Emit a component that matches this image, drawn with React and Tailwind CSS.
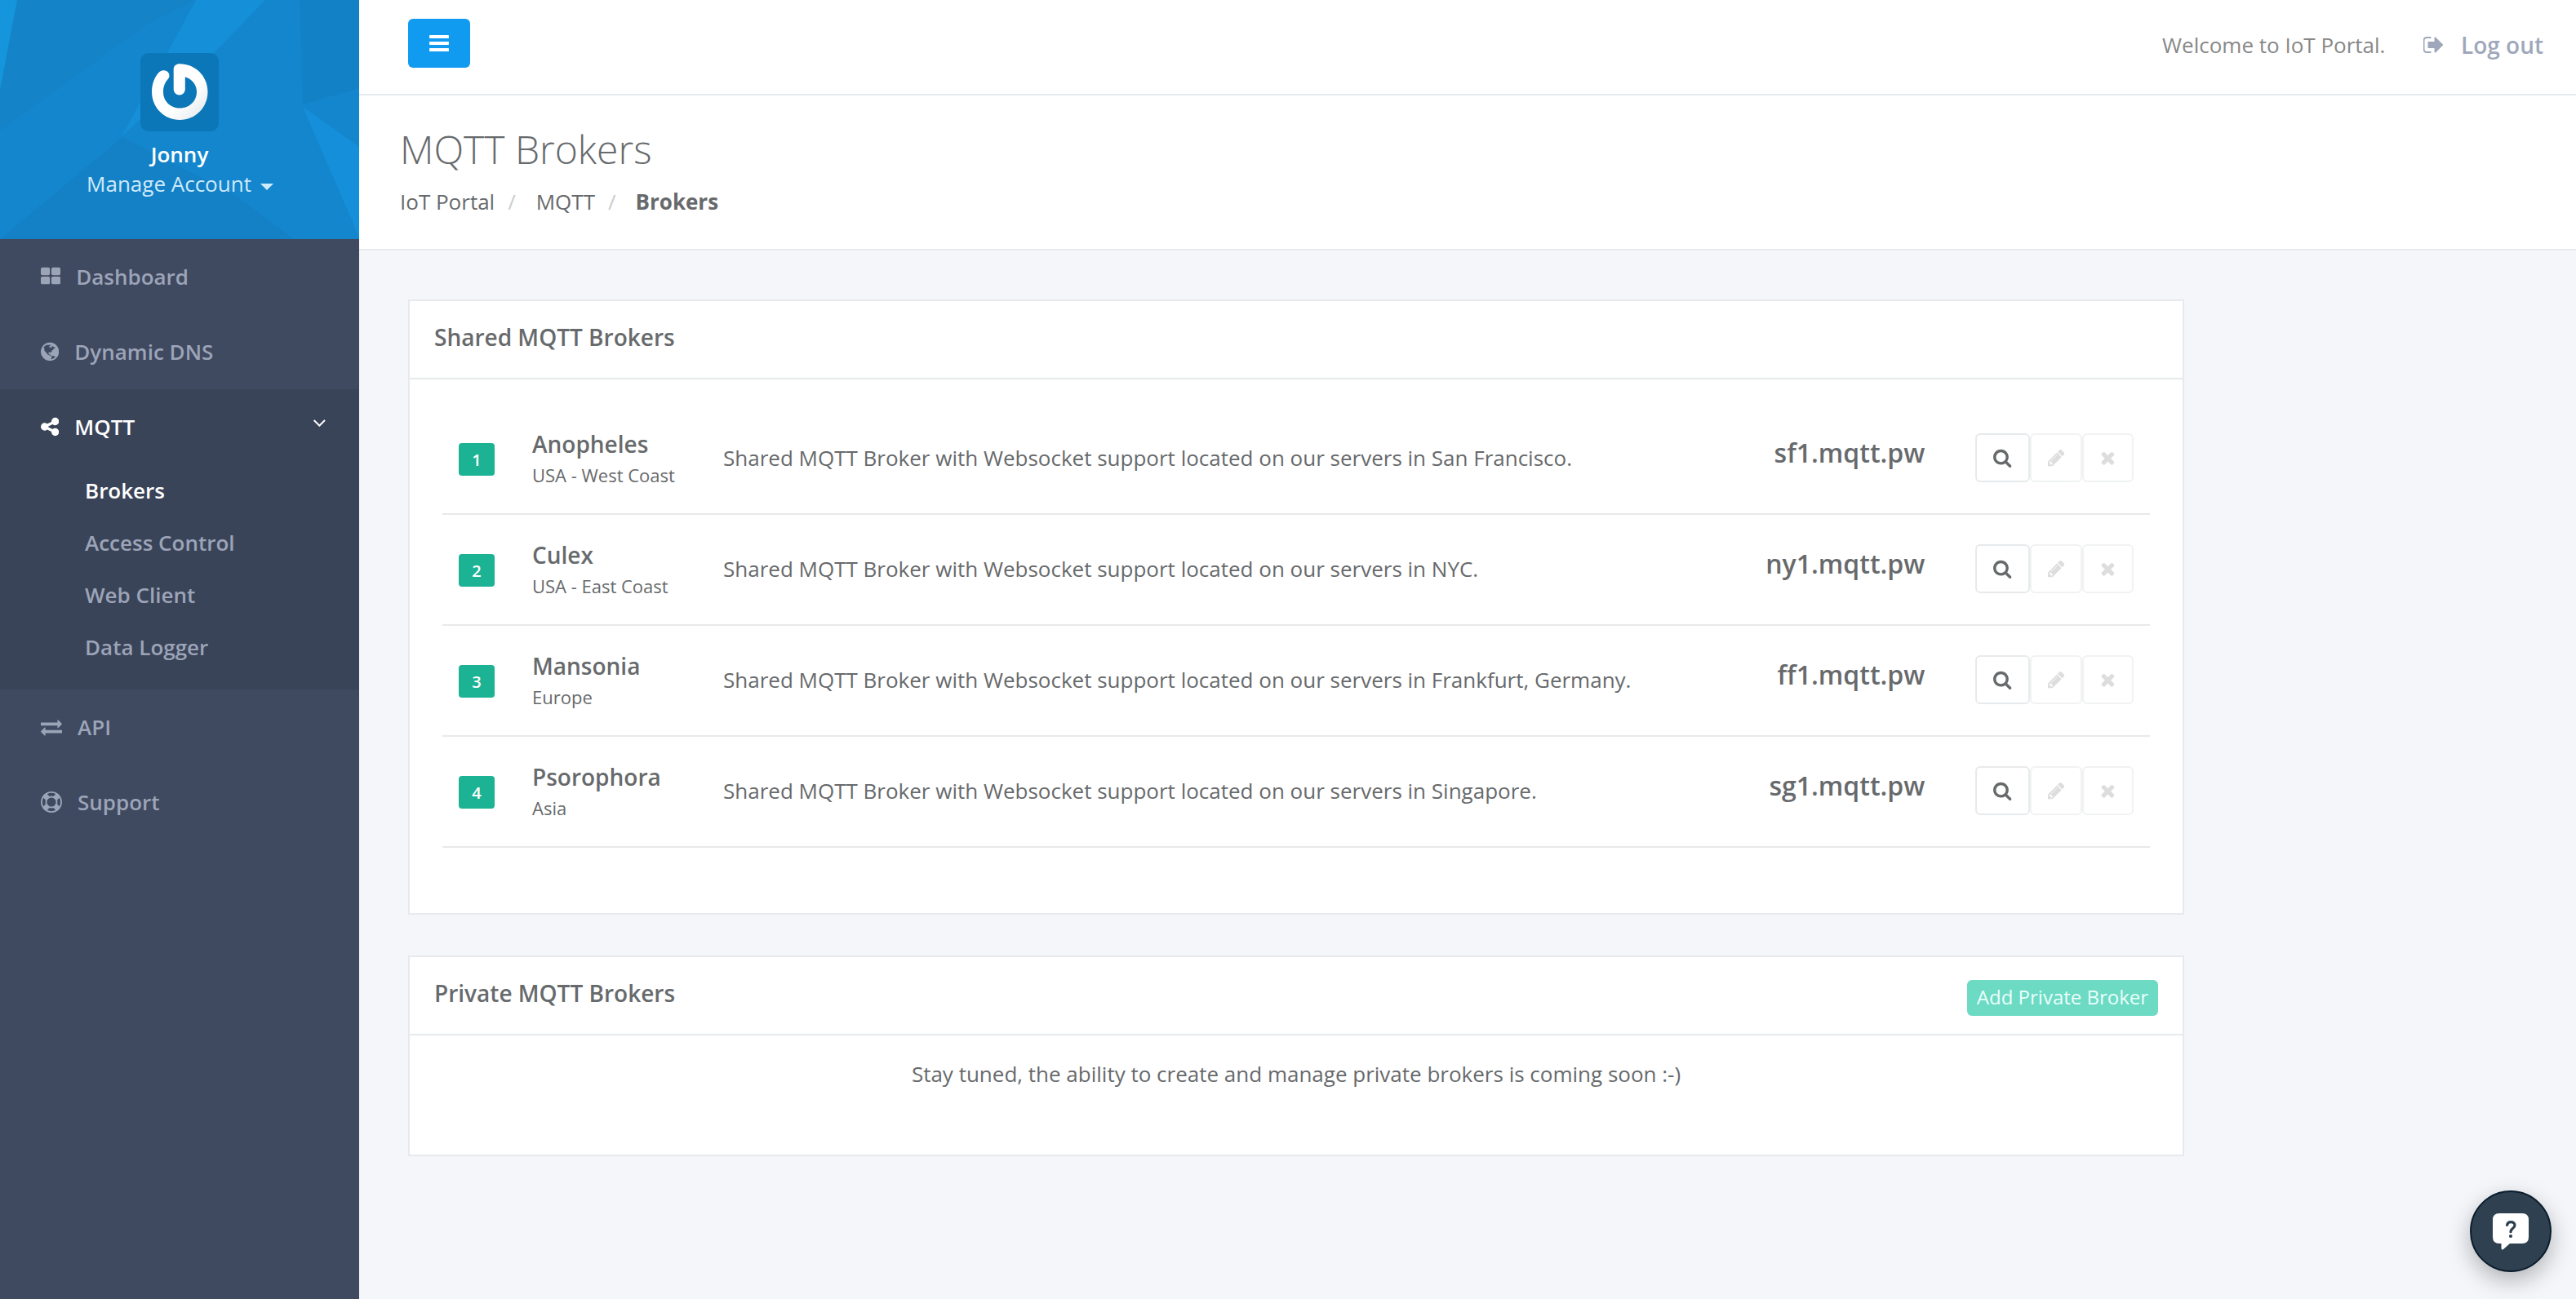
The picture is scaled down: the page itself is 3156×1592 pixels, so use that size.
import React from "react";

const ICONS = {
  bars: ["128 0 1536 1792", "M1664 1344v128q0 26-19 45t-45 19h-1408q-26 0-45-19t-19-45v-128q0-26 19-45t45-19h1408q26 0 45 19t19 45zm0-512v128q0 26-19 45t-45 19h-1408q-26 0-45-19t-19-45v-128q0-26 19-45t45-19h1408q26 0 45 19t19 45zm0-512v128q0 26-19 45t-45 19h-1408q-26 0-45-19t-19-45v-128q0-26 19-45t45-19h1408q26 0 45 19t19 45z"],
  thLarge: ["64 0 1664 1792", "M832 1024v384q0 52-38 90t-90 38h-512q-52 0-90-38t-38-90v-384q0-52 38-90t90-38h512q52 0 90 38t38 90zm0-768v384q0 52-38 90t-90 38h-512q-52 0-90-38t-38-90v-384q0-52 38-90t90-38h512q52 0 90 38t38 90zm896 768v384q0 52-38 90t-90 38h-512q-52 0-90-38t-38-90v-384q0-52 38-90t90-38h512q52 0 90 38t38 90zm0-768v384q0 52-38 90t-90 38h-512q-52 0-90-38t-38-90v-384q0-52 38-90t90-38h512q52 0 90 38t38 90z"],
  globe: ["128 0 1536 1792", "M896 128q209 0 385.5 103t279.5 279.5 103 385.5-103 385.5-279.5 279.5-385.5 103-385.5-103-279.5-279.5-103-385.5 103-385.5 279.5-279.5 385.5-103zm274 521q-2 1-9.500 9.500t-13.500 9.500q2 0 4.500-5t5-11 3.500-7q6-7 22-15 14-6 52-12 34-8 51 11-2-2 9.500-13t14.500-12q3-2 15-4.500t15-7.500l2-22q-12 1-17.500-7t-6.500-21q0 2-6 8 0-7-4.500-8t-11.500 1-9 1q-10-3-15-7.500t-8-16.500-4-15q-2-5-9.500-11t-9.500-10q-1-2-2.500-5.500t-3-6.500-4-5.500-5.500-2.500-7 5-7.500 10-4.500 5q-3-2-6-1.500t-4.500 1-4.500 3-5 3.500q-3 2-8.500 3t-8.500 2q15-5-1-11-10-4-16-3 9-4 7.500-12t-8.500-14h5q-1-4-8.500-8.500t-17.500-8.500-13-6q-8-5-34-9.500t-33-.5q-5 6-4.500 10.500t4 14 3.500 12.500q1 6-5.500 13t-6.500 12q0 7 14 15.500t10 21.500q-3 8-16 16t-16 12q-5 8-1.500 18.500t10.500 16.500q2 2 1.500 4t-3.500 4.500-5.500 4-6.500 3.500l-3 2q-11 5-20.500-6t-13.500-26q-7-25-16-30-23-8-29 1-5-13-41-26-25-9-58-4 6-1 0-15-7-15-19-12 3-6 4-17.500t1-13.500q3-13 12-23 1-1 7-8.500t9.500-13.500.5-6q35 4 50-11 5-5 11.500-17t10.500-17q9-6 14-5.500t14.500 5.500 14.500 5q14 1 15.500-11t-7.500-20q12 1 3-17-4-7-8-9-12-4-27 5-8 4 2 8-1-1-9.500 10.500t-16.500 17.500-16-5q-1-1-5.500-13.500t-9.500-13.500q-8 0-16 15 3-8-11-15t-24-8q19-12-8-27-7-4-20.500-5t-19.500 4q-5 7-5.500 11.500t5 8 10.500 5.500 11.500 4 8.500 3q14 10 8 14-2 1-8.500 3.500t-11.500 4.500-6 4q-3 4 0 14t-2 14q-5-5-9-17.500t-7-16.500q7 9-25 6l-10-1q-4 0-16 2t-20.500 1-13.500-8q-4-8 0-20 1-4 4-2-4-3-11-9.500t-10-8.500q-46 15-94 41 6 1 12-1 5-2 13-6.500t10-5.500q34-14 42-7l5-5q14 16 20 25-7-4-30-1-20 6-22 12 7 12 5 18-4-3-11.500-10t-14.500-11-15-5q-16 0-22 1-146 80-235 222 7 7 12 8 4 1 5 9t2.500 11 11.500-3q9 8 3 19 1-1 44 27 19 17 21 21 3 11-10 18-1-2-9-9t-9-4q-3 5 .5 18.500t10.500 12.500q-7 0-9.500 16t-2.500 35.500-1 23.500l2 1q-3 12 5.500 34.500t21.500 19.500q-13 3 20 43 6 8 8 9 3 2 12 7.500t15 10 10 10.500q4 5 10 22.500t14 23.500q-2 6 9.500 20t10.500 23q-1 0-2.500 1t-2.500 1q3 7 15.500 14t15.500 13q1 3 2 10t3 11 8 2q2-20-24-62-15-25-17-29-3-5-5.500-15.500t-4.500-14.500q2 0 6 1.500t8.500 3.500 7.500 4 2 3q-3 7 2 17.500t12 18.500 17 19 12 13q6 6 14 19.500t0 13.500q9 0 20 10.500t17 19.500q5 8 8 26t5 24q2 7 8.500 13.500t12.500 9.500l16 8 13 7q5 2 18.500 10.500t21.500 11.500q10 4 16 4t14.500-2.500 13.500-3.500q15-2 29 15t21 21q36 19 55 11-2 1 .5 7.500t8 15.500 9 14.500 5.500 8.500q5 6 18 15t18 15q6-4 7-9-3 8 7 20t18 10q14-3 14-32-31 15-49-18 0-1-2.500-5.500t-4-8.500-2.500-8.500 0-7.500 5-3q9 0 10-3.500t-2-12.500-4-13q-1-8-11-20t-12-15q-5 9-16 8t-16-9q0 1-1.500 5.500t-1.500 6.500q-13 0-15-1 1-3 2.500-17.500t3.500-22.500q1-4 5.500-12t7.500-14.500 4-12.500-4.500-9.500-17.500-2.500q-19 1-26 20-1 3-3 10.500t-5 11.500-9 7q-7 3-24 2t-24-5q-13-8-22.500-29t-9.500-37q0-10 2.500-26.500t3-25-5.500-24.500q3-2 9-9.500t10-10.500q2-1 4.500-1.500t4.500 0 4-1.500 3-6q-1-1-4-3-3-3-4-3 7 3 28.500-1.500t27.500 1.500q15 11 22-2 0-1-2.500-9.500t-.5-13.500q5 27 29 9 3 3 15.500 5t17.500 5q3 2 7 5.500t5.500 4.500 5-.5 8.500-6.500q10 14 12 24 11 40 19 44 7 3 11 2t4.500-9.500 0-14-1.500-12.500l-1-8v-18l-1-8q-15-3-18.500-12t1.500-18.500 15-18.500q1-1 8-3.500t15.500-6.500 12.500-8q21-19 15-35 7 0 11-9-1 0-5-3t-7.500-5-4.500-2q9-5 2-16 5-3 7.500-11t7.500-10q9 12 21 2 7-8 1-16 5-7 20.500-10.500t18.500-9.500q7 2 8-2t1-12 3-12q4-5 15-9t13-5l17-11q3-4 0-4 18 2 31-11 10-11-6-20 3-6-3-9.500t-15-5.500q3-1 11.500-.5t10.500-1.500q15-10-7-16-17-5-43 12zm-163 877q206-36 351-189-3-3-12.500-4.500t-12.500-3.500q-18-7-24-8 1-7-2.500-13t-8-9-12.500-8-11-7q-2-2-7-6t-7-5.500-7.500-4.500-8.500-2-10 1l-3 1q-3 1-5.500 2.500t-5.500 3-4 3 0 2.500q-21-17-36-22-5-1-11-5.500t-10.500-7-10-1.500-11.500 7q-5 5-6 15t-2 13q-7-5 0-17.500t2-18.500q-3-6-10.500-4.500t-12 4.500-11.500 8.500-9 6.500-8.500 5.500-8.500 7.500q-3 4-6 12t-5 11q-2-4-11.500-6.500t-9.500-5.500q2 10 4 35t5 38q7 31-12 48-27 25-29 40-4 22 12 26 0 7-8 20.500t-7 21.500q0 6 2 16z"],
  share: ["128 0 1536 1792", "M1344 1024q133 0 226.500 93.500t93.500 226.500-93.500 226.500-226.500 93.500-226.500-93.500-93.500-226.500q0-12 2-34l-360-180q-92 86-218 86-133 0-226.500-93.500t-93.500-226.500 93.500-226.500 226.500-93.500q126 0 218 86l360-180q-2-22-2-34 0-133 93.500-226.500t226.500-93.500 226.500 93.500 93.500 226.500-93.500 226.500-226.500 93.500q-126 0-218-86l-360 180q2 22 2 34t-2 34l360 180q92-86 218-86z"],
  exchange: ["0 0 1792 1792", "M1792 1184v192q0 13-9.500 22.500t-22.500 9.500h-1376v192q0 13-9.500 22.500t-22.500 9.500q-12 0-24-10l-319-320q-9-9-9-22 0-14 9-23l320-320q9-9 23-9 13 0 22.500 9.500t9.500 22.500v192h1376q13 0 22.500 9.500t9.500 22.500zm0-544q0 14-9 23l-320 320q-9 9-23 9-13 0-22.500-9.500t-9.500-22.500v-192h-1376q-13 0-22.500-9.500t-9.500-22.500v-192q0-13 9.500-22.500t22.500-9.500h1376v-192q0-14 9-23t23-9q12 0 24 10l319 319q9 9 9 23z"],
  lifeRing: ["0 0 1792 1792", "M896 0q182 0 348 71t286 191 191 286 71 348-71 348-191 286-286 191-348 71-348-71-286-191-191-286-71-348 71-348 191-286 286-191 348-71zm0 128q-190 0-361 90l194 194q82-28 167-28t167 28l194-194q-171-90-361-90zm-678 1129l194-194q-28-82-28-167t28-167l-194-194q-90 171-90 361t90 361zm678 407q190 0 361-90l-194-194q-82 28-167 28t-167-28l-194 194q171 90 361 90zm0-384q159 0 271.500-112.500t112.500-271.500-112.500-271.500-271.500-112.500-271.500 112.500-112.500 271.500 112.500 271.500 271.500 112.500zm484-217l194 194q90-171 90-361t-90-361l-194 194q28 82 28 167t-28 167z"],
  angleDown: ["320 0 1152 1792", "M1395 736q0 13-10 23l-466 466q-10 10-23 10t-23-10l-466-466q-10-10-10-23t10-23l50-50q10-10 23-10t23 10l393 393 393-393q10-10 23-10t23 10l50 50q10 10 10 23z"],
  signOut: ["96 0 1568 1792", "M704 1440q0 4 1 20t.5 26.500-3 23.500-10 19.500-20.500 6.500h-320q-119 0-203.500-84.500t-84.500-203.500v-704q0-119 84.500-203.500t203.500-84.500h320q13 0 22.500 9.500t9.500 22.500q0 4 1 20t.5 26.500-3 23.500-10 19.500-20.500 6.500h-320q-66 0-113 47t-47 113v704q0 66 47 113t113 47h312l11.500 1 11.500 3 8 5.500 7 9 2 13.500zm928-544q0 26-19 45l-544 544q-19 19-45 19t-45-19-19-45v-288h-448q-26 0-45-19t-19-45v-384q0-26 19-45t45-19h448v-288q0-26 19-45t45-19 45 19l544 544q19 19 19 45z"],
  search: ["64 0 1664 1792", "M1216 832q0-185-131.500-316.500t-316.500-131.500-316.500 131.500-131.500 316.500 131.500 316.500 316.500 131.500 316.500-131.500 131.500-316.500zm512 832q0 52-38 90t-90 38q-54 0-90-38l-343-342q-179 124-399 124-143 0-273.500-55.500t-225-150-150-225-55.500-273.500 55.500-273.500 150-225 225-150 273.500-55.500 273.500 55.500 225 150 150 225 55.500 273.500q0 220-124 399l343 343q37 37 37 90z"],
  pencil: ["128 0 1536 1792", "M491 1536l91-91-235-235-91 91v107h128v128h107zm523-928q0-22-22-22-10 0-17 7l-542 542q-7 7-7 17 0 22 22 22 10 0 17-7l542-542q7-7 7-17zm-54-192l416 416-832 832h-416v-416zm683 96q0 53-37 90l-166 166-416-416 166-165q36-38 90-38 53 0 91 38l235 234q37 39 37 91z"],
  times: ["192 0 1408 1792", "M1490 1322q0 40-28 68l-136 136q-28 28-68 28t-68-28l-294-294-294 294q-28 28-68 28t-68-28l-136-136q-28-28-28-68t28-68l294-294-294-294q-28-28-28-68t28-68l136-136q28-28 68-28t68 28l294 294 294-294q28-28 68-28t68 28l136 136q28 28 28 68t-28 68l-294 294 294 294q28 28 28 68z"],
};

function Icon({ name, className }) {
  const [viewBox, d] = ICONS[name];
  return (
    <svg viewBox={viewBox} className={`w-auto shrink-0 fill-current ${className}`} aria-hidden="true">
      <path d={d} />
    </svg>
  );
}

function ProfileHeader() {
  return (
    <div className="relative h-[293px] overflow-hidden bg-[#1486cd]">
      <svg viewBox="0 0 440 293" className="absolute inset-0 h-full w-full" aria-hidden="true">
        <path d="M0 0H240L180 30L0 160Z" fill="#1483c7" />
        <path d="M0 0H21L0 110Z" fill="#1596dc" />
        <path d="M367 0H440V108L371 128Z" fill="#1381c6" />
        <path d="M150 168L290 240L360 293H0Z" fill="#1481c7" />
        <path d="M240 0H325L262 65L149 167L205 65Z" fill="#168fd9" />
        <path d="M371 131L440 180V290Z" fill="#168fda" />
      </svg>
      <div className="relative flex flex-col items-center pt-[65px]">
        <svg viewBox="0 0 96 96" className="h-24 w-24" aria-hidden="true">
          <defs>
            <linearGradient id="ring" x1="0" y1="0" x2="1" y2="1">
              <stop offset="0.6" stopColor="#ffffff" />
              <stop offset="1" stopColor="#dfe4ea" />
            </linearGradient>
          </defs>
          <rect width="96" height="96" rx="10" fill="#0b77b9" />
          <path
            d="M48 13.300C67 13.300 82.500 28 82.500 47.500S67 82 48.300 82S14 67 14 47.500C14 37 18 28 23.500 23C30 18 38.500 24.500 34.500 31C30.500 35.500 28 40.500 28 47.500C28 59.500 37 67.500 48.500 67.500S69 59 69 47.500C69 39 63.500 32 54.800 29.300V44.500A7.050 7.050 0 0 1 40.700 44.500V20C40.700 15.500 44 13.300 48 13.300Z"
            fill="url(#ring)"
          />
        </svg>
        <div className="mt-[10px] h-9 text-[26px] leading-9 font-semibold text-white">Jonny</div>
        <div className="flex h-9 items-center gap-[11px] pl-px text-[26px] leading-9 text-[#cfeafb]">
          <span>Manage Account</span>
          <span className="mt-[7px] h-0 w-0 border-x-8 border-t-8 border-x-transparent border-t-[#cfeafb]" />
        </div>
      </div>
    </div>
  );
}

function NavItem({ icon, label, active, arrow }) {
  return (
    <a className={`flex h-[92px] items-center pr-10 pl-[50px] text-[26px] leading-9 font-semibold ${active ? "text-white" : "text-[#9ca4b8]"}`}>
      <Icon name={icon} className="h-[26px]" />
      <span className="ml-[19px]">{label}</span>
      {arrow && <Icon name="angleDown" className="mb-[10px] ml-auto h-[26px]" />}
    </a>
  );
}

function Sidebar() {
  return (
    <nav className="w-[440px] shrink-0 bg-[#3f4960]">
      <ProfileHeader />
      <NavItem icon="thLarge" label="Dashboard" />
      <NavItem icon="globe" label="Dynamic DNS" />
      <div className="bg-[#3a4458] pb-5">
        <NavItem icon="share" label="MQTT" active arrow />
        {["Brokers", "Access Control", "Web Client", "Data Logger"].map((label, i) => (
          <a key={label} className={`flex h-16 items-center pl-[104px] text-[26px] leading-9 font-semibold ${i === 0 ? "text-white" : "text-[#9ca4b8]"}`}>
            {label}
          </a>
        ))}
      </div>
      <NavItem icon="exchange" label="API" />
      <NavItem icon="lifeRing" label="Support" />
    </nav>
  );
}

function TopBar() {
  return (
    <header className="flex h-[117px] items-start justify-between border-b-2 border-[#e7eaec] bg-white pr-10 pl-[60px]">
      <button className="mt-[23px] flex h-[60px] w-[76px] items-center justify-center rounded-md bg-[#109bf1] text-white">
        <Icon name="bars" className="h-7" />
      </button>
      <div className="mt-[37px] flex h-9 items-center leading-9">
        <span className="text-[26px] text-[#888888]">Welcome to IoT Portal.</span>
        <a className="-mt-px ml-[47px] flex items-center text-[28px] font-semibold text-[#9fa8bb]">
          <Icon name="signOut" className="mt-px h-7" />
          <span className="ml-[21px]">Log out</span>
        </a>
      </div>
    </header>
  );
}

function PageHeading() {
  return (
    <section className="h-[190px] border-b-2 border-[#e7eaec] bg-white pt-10 pl-[50px]">
      <h2 className="text-[48px] leading-[52px] font-light">MQTT Brokers</h2>
      <div className="mt-5 flex text-[26px] leading-9">
        <span>IoT Portal</span>
        <span className="ml-4 text-[#cccccc]">/</span>
        <span className="ml-[25px]">MQTT</span>
        <span className="ml-4 text-[#cccccc]">/</span>
        <strong className="ml-[24px] font-bold">Brokers</strong>
      </div>
    </section>
  );
}

const BROKERS = [
  ["Anopheles", "USA - West Coast", "San Francisco.", "sf1.mqtt.pw"],
  ["Culex", "USA - East Coast", "NYC.", "ny1.mqtt.pw"],
  ["Mansonia", "Europe", "Frankfurt, Germany.", "ff1.mqtt.pw"],
  ["Psorophora", "Asia", "Singapore.", "sg1.mqtt.pw"],
];

function RowButton({ icon, muted }) {
  return (
    <button className={`flex h-[60px] items-center rounded-md border-2 bg-white px-5 ${muted ? "border-[#f0f2f3] text-[#dddddd]" : "border-[#e7eaec] text-[#676a6c]"}`}>
      <Icon name={icon} className="h-6" />
    </button>
  );
}

function BrokerRow({ index, broker: [name, region, place, host] }) {
  return (
    <div className="flex h-[136px] items-start border-b-2 border-[#e7e9ea] px-5">
      <div className="w-[90px] pt-12">
        <span className="flex h-10 w-11 items-center justify-center rounded bg-[#1cb394] pt-px text-[20px] leading-5 font-semibold text-white">{index}</span>
      </div>
      <div className="w-[234px] pt-[31px]">
        <div className="text-[28px] leading-9 font-semibold">{name}</div>
        <div className="mt-[2px] text-[22px] leading-9">{region}</div>
      </div>
      <div className="flex-1 pt-12 text-[26px] leading-9">
        Shared MQTT Broker with Websocket support located on our servers in {place}
      </div>
      <div className="pt-[42px] pr-[62px] text-[32px] leading-9 font-semibold">{host}</div>
      <div className="flex pt-9">
        <RowButton icon="search" />
        <RowButton icon="pencil" muted />
        <RowButton icon="times" muted />
      </div>
    </div>
  );
}

function Panel({ title, action, className, children }) {
  return (
    <section className={`w-[2176px] border-2 border-[#e7eaec] bg-white ${className}`}>
      <div className="flex h-24 items-start justify-between border-b-2 border-[#e7eaec] pr-[30px] pl-[30px]">
        <h5 className="pt-[26px] text-[28px] leading-9 font-semibold">{title}</h5>
        {action}
      </div>
      {children}
    </section>
  );
}

function HelpButton() {
  return (
    <button className="absolute right-[30px] bottom-[33px] flex h-[100px] w-[100px] items-center justify-center rounded-full border-2 border-[#0b1d2c] bg-[#2f4050] shadow-[0_10px_28px_rgba(0,0,0,0.28)]">
      <svg viewBox="0 0 44 45" className="h-[45px] w-11 shrink-0" aria-hidden="true">
        <path d="M8 0H36Q44 0 44 8V29Q44 37 36 37H21L13 44Q10.500 45.500 10.500 42.500V37H8Q0 37 0 29V8Q0 0 8 0Z" fill="#ffffff" />
        <path d="M17.500 14.500C18 11.500 20 10.700 22.300 10.700C25 10.700 27 12.300 27 14.800C27 18.300 22 18.300 22 22.700" fill="none" stroke="#2f4050" strokeWidth="3.200" strokeLinecap="round" />
        <circle cx="22" cy="28" r="2.100" fill="#2f4050" />
      </svg>
    </button>
  );
}

export default function App() {
  return (
    <div className="relative flex h-[1592px] w-full overflow-hidden bg-[#f4f6fa] font-['Open_Sans',sans-serif] text-[#676a6c]">
      <Sidebar />
      <div className="min-w-0 flex-1">
        <TopBar />
        <PageHeading />
        <main className="pt-[60px] pl-[60px]">
          <Panel title="Shared MQTT Brokers" className="h-[754px]">
            <div className="px-10 pt-[30px]">
              {BROKERS.map((b, i) => (
                <BrokerRow key={b[0]} index={i + 1} broker={b} />
              ))}
            </div>
          </Panel>
          <Panel
            title="Private MQTT Brokers"
            className="mt-[50px] h-[246px]"
            action={
              <button className="mt-7 h-11 w-[234px] rounded-md bg-[#6ddac4] pb-[2px] text-center text-[24px] leading-[40px] text-[#eafffb]">
                Add Private Broker
              </button>
            }
          >
            <p className="pt-[29px] text-center text-[26px] leading-9">
              Stay tuned, the ability to create and manage private brokers is coming soon :-)
            </p>
          </Panel>
        </main>
      </div>
      <HelpButton />
    </div>
  );
}
